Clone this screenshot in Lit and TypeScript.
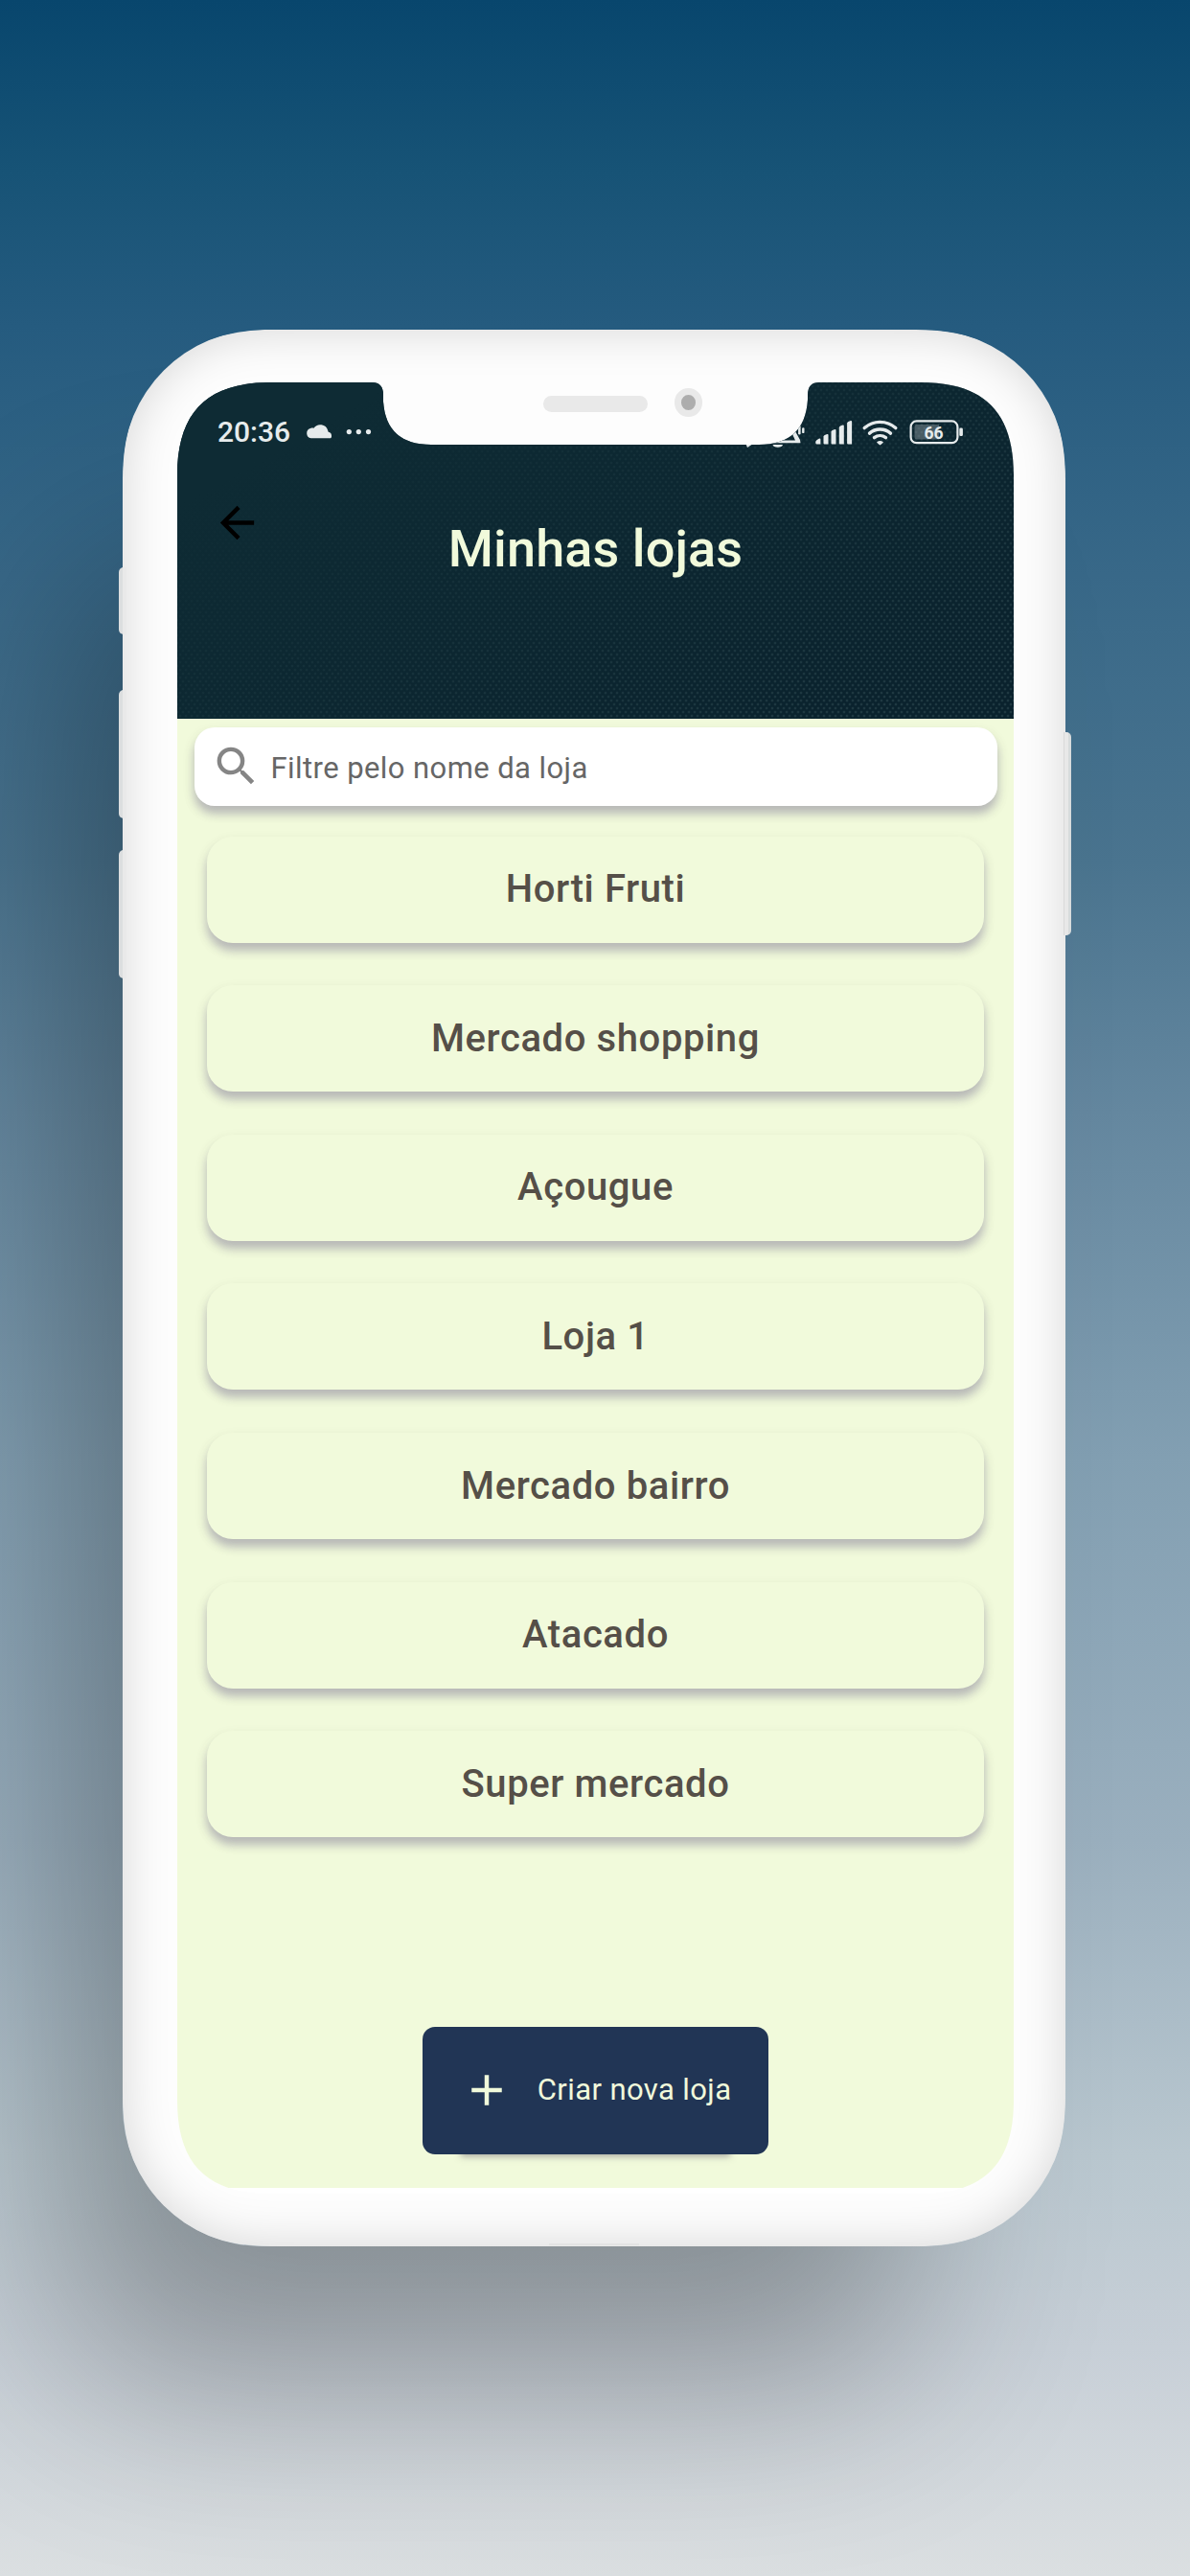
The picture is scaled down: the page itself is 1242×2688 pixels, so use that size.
import { LitElement, html, css, svg } from "lit";
import { customElement, property } from "lit/decorators.js";

@customElement("store-card")
class StoreCard extends LitElement {
  @property() name = "";

  static styles = css`
    :host {
      display: flex;
      align-items: center;
      justify-content: center;
      height: 111px;
      border-radius: 27px;
      background: #f1fadb;
      box-shadow: 0 8px 10px rgba(125, 115, 150, 0.42), 0 6px 14px rgba(90, 90, 90, 0.1);
      color: #554f48;
      font: 500 40px/48px Roboto, sans-serif;
      letter-spacing: 0.6px;
      white-space: nowrap;
    }
  `;

  render() {
    return html`<span>${this.name}</span>`;
  }
}

@customElement("status-bar")
class StatusBar extends LitElement {
  static styles = css`
    :host {
      display: flex;
      align-items: center;
      justify-content: space-between;
      height: 104px;
      padding: 0 48px 0 42px;
      color: #e6ebec;
      font-family: Roboto, sans-serif;
    }
    .left {
      display: flex;
      align-items: center;
    }
    .time {
      font: 500 30px/40px Roboto, sans-serif;
      letter-spacing: 0;
      width: 91px;
    }
    .num {
      font: 700 17.5px Roboto, sans-serif;
    }
    svg {
      display: block;
    }
  `;

  render() {
    const bars = [
      [850.7, 457.5],
      [859, 453],
      [867, 448],
      [875.3, 443.5],
      [883.6, 439],
    ];
    return html`
      <div class="left">
        <span class="time">20:36</span>
        <svg width="70" height="40" viewBox="318 431 70 40" fill="#e6ebec">
          <path d="M324.5 457.2a5.2 5.2 0 0 1-.6-10.1c1.800-.7 2.600-.5 3.600-.3a8.200 8.200 0 0 1 14.600 2.300l.6 1.600a3.900 3.900 0 0 1 3.300 3.800v1.200c0 .9-.6 1.500-1.500 1.500z" />
          <circle cx="364.3" cy="450.6" r="2.600" />
          <circle cx="374.3" cy="450.6" r="2.600" />
          <circle cx="384.5" cy="450.6" r="2.600" />
        </svg>
      </div>
      <svg width="240" height="40" viewBox="769.5 431 240 40" fill="#e6ebec">
        <path d="M777 461l7 3-4.500 3z" />
        <path d="M800 459.600h29.500l-5.500-12 3-2 7.500 13.500.5 3.200h-35z" />
        <path d="M806 464h10.500a5.300 3.200 0 0 1-10.500 0z" />
        <rect x="832.600" y="444" width="2.500" height="9.500" rx="1.200" />
        <rect x="836.600" y="446.300" width="2.400" height="5.800" rx="1.200" />
        ${bars.map(([x, y], i) =>
          i === 0
            ? svg`<path d="M850.700 461.500q0-1.500 1.200-2.200l2.300-1.500q1.700-.8 1.700.8v4.800h-4q-1.200 0-1.200-1.900z" />`
            : svg`<path d="M${x} ${y + 2.6}q.2-1 1.200-1.500l2.600-1.100q1.200-.3 1.200 1v${462.5 - y}h-4q-1 0-1-1z" />`,
        )}
        <g fill="none" stroke="#e6ebec" stroke-width="3.400" stroke-linecap="round">
          <path d="M901.700 446.600a24.500 24.500 0 0 1 32.600 0" />
          <path d="M907 452.100a17 17 0 0 1 22 0" />
          <path d="M912 456.700a9.700 9.700 0 0 1 12 0" />
        </g>
        <path d="M914.900 460.900q3.100-1.900 6.200 0 .5.500 0 1l-2.300 2.200q-.8.700-1.600 0l-2.300-2.200q-.5-.5 0-1z" />
        <rect x="950.100" y="439.400" width="48.800" height="22.800" rx="6" fill="none" stroke="#e6ebec" stroke-width="2.200" />
        <path d="M956.500 443h23v15.600h-23q-2.500 0-2.500-2.500v-10.600q0-2.500 2.500-2.500z" fill="#e6ebec" fill-opacity=".28" />
        <rect x="1000.800" y="446.500" width="3.600" height="8.600" rx="1.400" />
        <text class="num" x="974" y="457.700" text-anchor="middle">66</text>
      </svg>
    `;
  }
}

@customElement("app-root")
class AppRoot extends LitElement {
  stores = [
    "Horti Fruti",
    "Mercado shopping",
    "Açougue",
    "Loja 1",
    "Mercado bairro",
    "Atacado",
    "Super mercado",
  ];

  static styles = css`
    :host {
      display: block;
      width: 1242px;
      height: 2688px;
      overflow: hidden;
      box-sizing: border-box;
      padding: 344px 0 0 128px;
      font-family: Roboto, sans-serif;
      background: linear-gradient(
        180deg,
        #08466d 0,
        #175376 180px,
        #255b7f 340px,
        #386888 600px,
        #4a748f 900px,
        #64879f 1160px,
        #829fb2 1520px,
        #9aafbe 1920px,
        #b9c7cf 2250px,
        #c7cfd7 2450px,
        #dbdfe1 2688px
      );
    }
    .device {
      position: relative;
      width: 984px;
      height: 2000px;
      border-radius: 146px;
      box-shadow: -110px 190px 200px -50px rgba(0, 0, 0, 0.29);
    }
    .key {
      position: absolute;
      width: 8px;
      box-sizing: border-box;
      background: linear-gradient(90deg, #dcdedf 0 4px, #e9e9e9 4px);
    }
    .key.left {
      left: -4px;
      border-radius: 5px 0 0 5px;
    }
    .key.right {
      right: -6px;
      border-radius: 0 5px 5px 0;
      background: linear-gradient(90deg, #d9d9d9 0 1px, #e8e8e8 1px 5px, #d7dbdc 5px);
    }
    .k1 {
      top: 248px;
      height: 70px;
    }
    .k2 {
      top: 376px;
      height: 134px;
    }
    .k3 {
      top: 543px;
      height: 134px;
    }
    .k4 {
      top: 420px;
      height: 212px;
    }
    .body {
      height: 2000px;
      box-sizing: border-box;
      padding: 55px 54px 0 57px;
      border-radius: 146px;
      background: #fdfdfd;
      box-shadow: inset 0 0 50px rgba(0, 0, 0, 0.16);
      clip-path: path(
        "M0 156C0 57 57 0 156 0H828C927 0 984 57 984 156V1844C984 1943 927 2000 828 2000H156C57 2000 0 1943 0 1844Z"
      );
    }
    .screen {
      display: flex;
      flex-direction: column;
      height: 1890px;
      box-sizing: border-box;
      padding-bottom: 6px;
      background: #fff;
      clip-path: path(
        "M0 97C0 31 31 0 97 0H203Q215 0 215 13V20Q218 65 265 65H607Q655 65 658 18V13Q658 0 670 0H776C842 0 873 31 873 97V1793C873 1859 842 1890 776 1890H97C31 1890 0 1859 0 1793Z"
      );
    }
    header {
      height: 351px;
      background: linear-gradient(150deg, #0e2b34 15%, transparent 90%),
        radial-gradient(circle, rgba(150, 190, 190, 0.24) 0, transparent 1.8px) 0 0 / 6px 8px,
        radial-gradient(circle, rgba(150, 190, 190, 0.24) 0, transparent 1.8px) 3px 4px / 6px 8px,
        #0a222d;
    }
    .toolbar {
      display: grid;
      grid-template-columns: 1fr auto 1fr;
      align-items: start;
    }
    .back {
      margin: 16px 0 0 36px;
    }
    svg {
      display: block;
    }
    h1 {
      margin: 37.500px 0 0;
      color: #f1fadb;
      font: 500 54px/64px Roboto, sans-serif;
      letter-spacing: 0.100px;
    }
    main {
      flex: 1;
      display: flex;
      flex-direction: column;
      padding: 9px 17.500px 35px;
      background: #f1fadb;
    }
    .search {
      display: flex;
      align-items: center;
      height: 82px;
      box-sizing: border-box;
      padding: 0 17.500px;
      gap: 9.500px;
      border-radius: 21px;
      background: #fff;
      box-shadow: 0 8px 10px rgba(125, 115, 150, 0.42), 0 6px 14px rgba(90, 90, 90, 0.1);
      color: #666;
      font: 400 31px/40px Roboto, sans-serif;
      letter-spacing: 0.42px;
    }
    .search svg {
      margin-top: -2px;
    }
    .search span {
      margin-top: 3px;
    }
    .list {
      display: flex;
      flex-direction: column;
      gap: 44.600px;
      padding: 31.700px 13.500px 0;
    }
    .create {
      display: flex;
      align-items: center;
      align-self: center;
      margin-top: auto;
      width: 361.500px;
      height: 133.500px;
      box-sizing: border-box;
      padding: 0 0 0 40px;
      gap: 26px;
      border: 0;
      border-radius: 13px;
      background: #213555;
      box-shadow: 0 42px 7px -40px rgba(90, 80, 100, 0.5);
      color: #f1fadb;
      font: 400 31px/40px Roboto, sans-serif;
      letter-spacing: 0.4px;
      white-space: nowrap;
    }
    .speaker {
      position: absolute;
      left: 438.500px;
      top: 69px;
      width: 109.500px;
      height: 17px;
      border-radius: 9px;
      background: #e9e9e9;
    }
    .camera {
      position: absolute;
      left: 575.500px;
      top: 61px;
      width: 29.500px;
      height: 30px;
      box-sizing: border-box;
      border: 7px solid #e9e9e9;
      border-radius: 50%;
      background: #adadad;
    }
    .port {
      position: absolute;
      left: 445px;
      top: 1997px;
      width: 94px;
      height: 2px;
      background: #e3e3e3;
    }
  `;

  render() {
    return html`
      <div class="device">
        <div class="body">
          <div class="screen">
            <header>
              <status-bar></status-bar>
              <div class="toolbar">
                <svg class="back" width="53" height="53" viewBox="0 0 24 24">
                  <path d="M20 11H7.830l5.590-5.590L12 4l-8 8 8 8 1.410-1.410L7.830 13H20v-2z" />
                </svg>
                <h1>Minhas lojas</h1>
              </div>
            </header>
            <main>
              <div class="search">
                <svg width="53" height="53" viewBox="0 0 24 24" fill="#858585">
                  <path
                    d="M15.500 14h-.79l-.28-.27A6.471 6.471 0 0 0 16 9.500 6.500 6.500 0 1 0 9.500 16c1.610 0 3.090-.59 4.230-1.570l.27.280v.79l5 4.990L20.490 19l-4.990-5zm-6 0C7.010 14 5 11.990 5 9.500S7.010 5 9.500 5 14 7.010 14 9.500 11.990 14 9.500 14z"
                  />
                </svg>
                <span>Filtre pelo nome da loja</span>
              </div>
              <div class="list">
                ${this.stores.map((s) => html`<store-card .name=${s}></store-card>`)}
              </div>
              <button class="create">
                <svg width="54" height="54" viewBox="0 0 24 24" fill="#f1fadb">
                  <path d="M19 13h-6v6h-2v-6H5v-2h6V5h2v6h6v2z" />
                </svg>
                <span>Criar nova loja</span>
              </button>
            </main>
          </div>
        </div>
        <span class="key left k1"></span>
        <span class="key left k2"></span>
        <span class="key left k3"></span>
        <span class="key right k4"></span>
        <span class="speaker"></span>
        <span class="camera"></span>
        <span class="port"></span>
      </div>
    `;
  }
}
